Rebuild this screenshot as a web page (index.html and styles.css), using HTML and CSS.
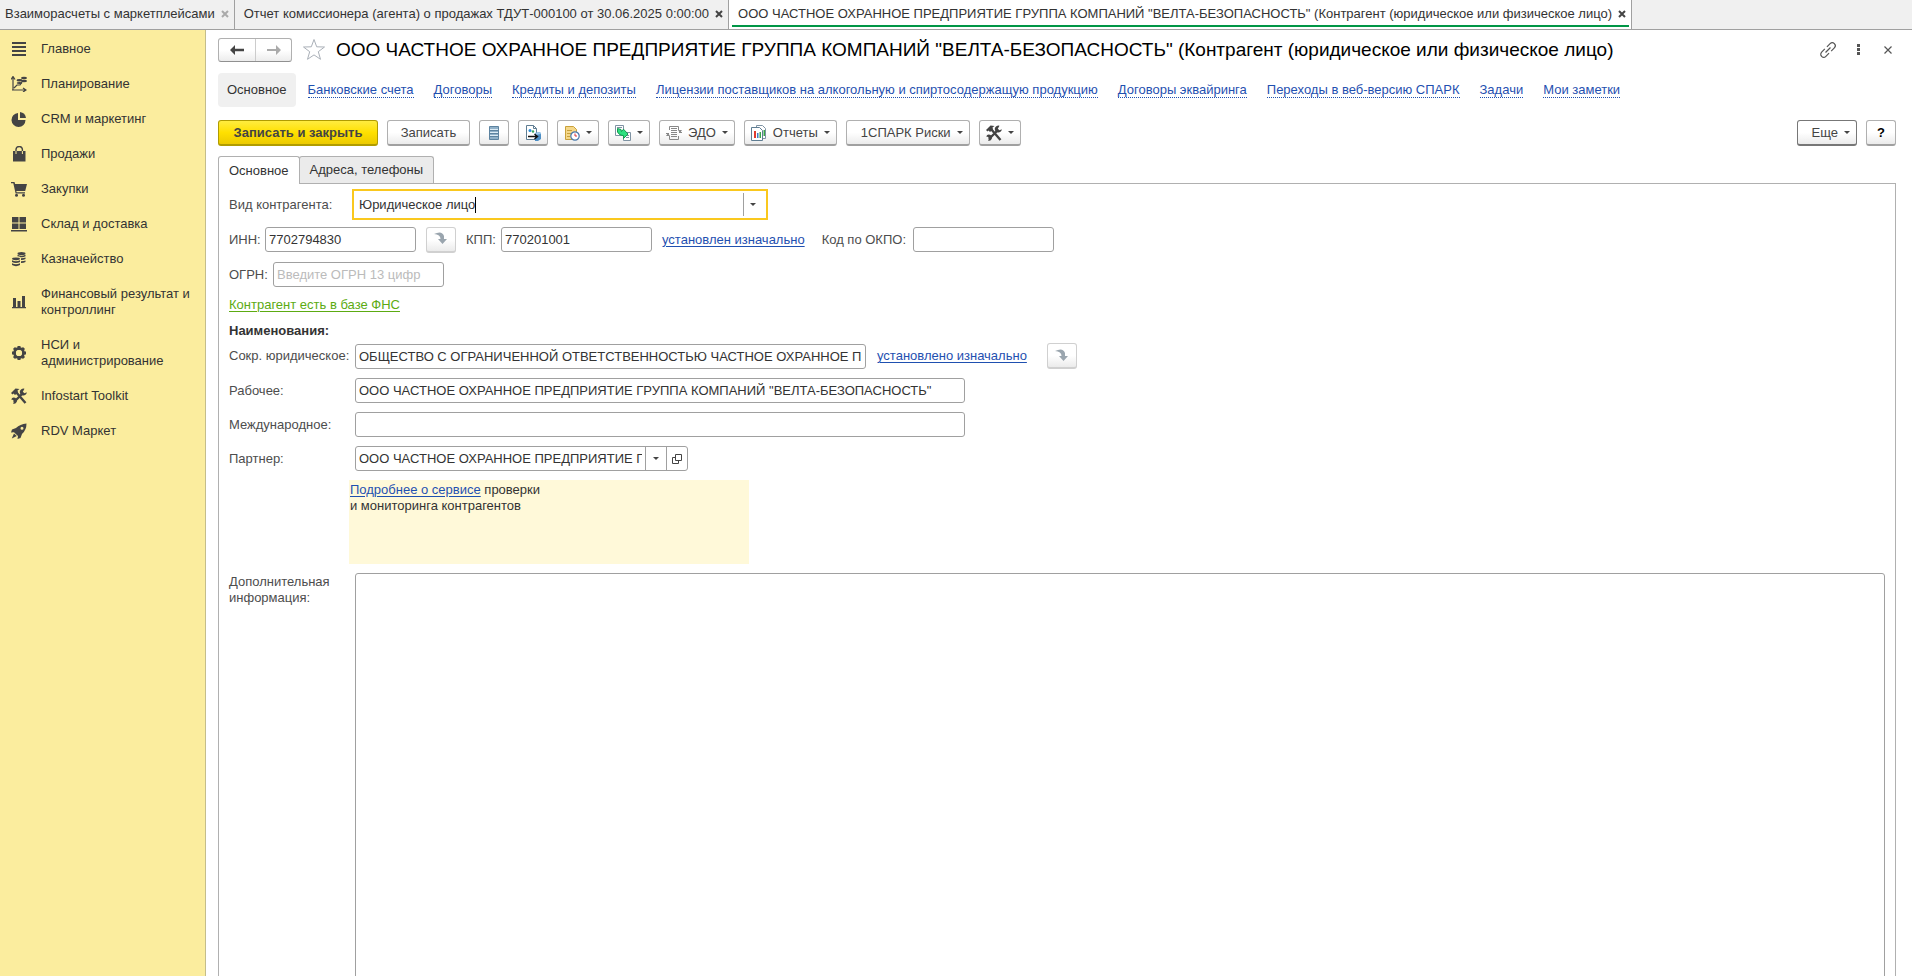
FILE: index.html
```html
<!DOCTYPE html>
<html lang="ru">
<head>
  <meta charset="UTF-8" />
  <meta name="viewport" content="width=device-width, initial-scale=1.0"/>
  <title>Контрагент</title>
  <link rel="stylesheet" href="styles.css">
</head>
<body>
  <div class="tabs">
    <div class="tab">Взаиморасчеты с маркетплейсами <button class="tab-close muted" aria-label="Закрыть"><svg width="8" height="8" viewBox="0 0 8 8"><path d="M1 1l6 6M7 1l-6 6"/></svg></button></div>
    <div class="tab">Отчет комиссионера (агента) о продажах ТДУТ-000100 от 30.06.2025 0:00:00 <button class="tab-close" aria-label="Закрыть"><svg width="8" height="8" viewBox="0 0 8 8"><path d="M1 1l6 6M7 1l-6 6"/></svg></button></div>
    <div class="tab active">ООО ЧАСТНОЕ ОХРАННОЕ ПРЕДПРИЯТИЕ ГРУППА КОМПАНИЙ "ВЕЛТА-БЕЗОПАСНОСТЬ" (Контрагент (юридическое или физическое лицо) <button class="tab-close" aria-label="Закрыть"><svg width="8" height="8" viewBox="0 0 8 8"><path d="M1 1l6 6M7 1l-6 6"/></svg></button></div>
  </div>

  <div class="layout">
    <nav class="sidebar">
      <a href="#"><svg class="icon" viewBox="0 0 16 16"><path d="M1 1h14v2H1zM1 5h14v2H1zM1 9h14v2H1zM1 13h14v2H1z"/></svg><span>Главное</span></a>
      <a href="#"><svg class="icon" viewBox="0 0 16 16"><path d="M2 14V1M0 3.500l2-3 2 3M1 14h13M12 12l3 2-3 2M3 12l3-3h3l2-3" fill="none" stroke="#444" stroke-width="1.200"/><ellipse cx="13" cy="2" rx="3" ry="1.300"/><ellipse cx="8.500" cy="4.200" rx="3" ry="1.300"/><ellipse cx="13" cy="5" rx="3" ry="1.200"/><ellipse cx="8.500" cy="7" rx="2.800" ry="1"/></svg><span>Планирование</span></a>
      <a href="#"><svg class="icon" viewBox="0 0 16 16"><path d="M7 2v7h7.500A7 7 0 1 1 7 2z"/><path d="M9 1a7 7 0 0 1 6 6H9z"/></svg><span>CRM и маркетинг</span></a>
      <a href="#"><svg class="icon" viewBox="0 0 16 16"><path d="M2 5h12.500v10.500H2z"/><path d="M5 8V3.500a3.200 3 0 0 1 6.400 0V8" fill="none" stroke="#444" stroke-width="1.400"/><path d="M5 5v3M11.400 5v3" stroke="#fbed9e"/></svg><span>Продажи</span></a>
      <a href="#"><svg class="icon" viewBox="0 0 16 16"><path d="M0 1h3.500l.6 2H16l-1.800 7H5.300l.4 1.300H14v1.200H4.600L2.300 2.200H0z"/><circle cx="5.500" cy="14.200" r="1.500"/><circle cx="12.500" cy="14.200" r="1.500"/></svg><span>Закупки</span></a>
      <a href="#"><svg class="icon" viewBox="0 0 16 16"><path d="M1 1h6.500v5.500H1zM8.500 1H15v5.500H8.500zM1 7.500h6.500V13H1zM8.500 7.500H15V13H8.500zM0 14h16v1.500H0z"/></svg><span>Склад и доставка</span></a>
      <a href="#"><svg class="icon" viewBox="0 0 16 16"><ellipse cx="10.500" cy="2.500" rx="4" ry="1.500"/><path d="M6.500 3.700q4 2 8 0v1.500q-2 1.500-5 1-1-.8-3-.9zM10 7.300q3 0 4.500-.8v1.600q-2 1-4.500.9zM10 10.300q3 0 4.500-.8v1.600q-2 1-4.500.9z"/><ellipse cx="5" cy="7.800" rx="4" ry="1.400"/><path d="M1 9.300q4 2 8 0v1.600q-4 2-8 0zM1 12.300q4 2 8 0v1.700q-4 2.300-8 0z"/></svg><span>Казначейство</span></a>
      <a href="#"><svg class="icon" viewBox="0 0 16 16"><path d="M1 13h14v1.200H1zM2 4h3v9H2zM6.500 7h3v6h-3zM11 2h3v11h-3z"/></svg><span>Финансовый результат и контроллинг</span></a>
      <a href="#"><svg class="icon" viewBox="0 0 16 16"><circle cx="8" cy="8" r="4.500" fill="none" stroke="#444" stroke-width="2.800"/><path d="M8 1v3M8 12v3M1 8h3M12 8h3M3 3l2 2M11 11l2 2M13 3l-2 2M3 13l2-2" stroke="#444" stroke-width="3"/><circle cx="8" cy="8" r="2.900" fill="#fbed9e"/></svg><span>НСИ и администрирование</span></a>
      <a href="#"><svg class="icon" viewBox="0 0 16 16"><path d="M3 14l8.500-8.500M5 4l9.500 11" fill="none" stroke="#444" stroke-width="2.400"/><path d="M0 5l4.500-4.500 4 .5-2 1.500.5 2L4 7 2.500 5.500 1.500 6.500z"/><path d="M13.500.7a3.500 3.500 0 1 0 2.300 3.500l-2.300 1-1.700-1.500zM2 15.500a3 3 0 1 0-1.800-4l2 .6.800 1.600z"/></svg><span>Infostart Toolkit</span></a>
      <a href="#"><svg class="icon" viewBox="0 0 16 16"><path fill-rule="evenodd" d="M15.500.5Q9 1 5 5L1 6.500 0 9.500l3-.2L7 13l-.5 3 3-1L11 11Q15.500 7 15.500.5zM11 3.700a1.500 1.500 0 1 1 0 3 1.500 1.500 0 0 1 0-3z"/><path d="M3 10.500L.8 15.500 5.800 13z"/></svg><span>RDV Маркет</span></a>
    </nav>

    <main class="page">
      <header class="title-row">
        <div class="history">
          <button aria-label="Назад"><svg width="14" height="10" viewBox="0 0 14 10"><path fill="#444" d="M0 5l5-5v3.700h9v2.600H5V10z"/></svg></button>
          <button aria-label="Вперед"><svg width="14" height="10" viewBox="0 0 14 10"><path fill="#aaa" d="M14 5L9 0v3.900H0v2.200h9V10z"/></svg></button>
        </div>
        <button class="plain star" aria-label="В избранное"><svg width="24" height="24" viewBox="0 0 24 24"><path fill="#fff" stroke="#aab0b8" d="M12 1.500l2.700 7.300 7.800.2-6.200 4.700 2.200 7.600-6.500-4.400-6.500 4.400 2.200-7.600L1.500 9l7.800-.2z"/></svg></button>
        <h1>ООО ЧАСТНОЕ ОХРАННОЕ ПРЕДПРИЯТИЕ ГРУППА КОМПАНИЙ "ВЕЛТА-БЕЗОПАСНОСТЬ" (Контрагент (юридическое или физическое лицо)</h1>
        <div class="window-tools">
          <button class="plain" aria-label="Ссылка"><svg width="16" height="16" viewBox="0 0 16 16"><g fill="none" stroke="#555" stroke-width="1.200" transform="rotate(-45 8 8)"><path d="M6.500 5H2a3 3 0 0 0-3 3 3 3 0 0 0 3 3h4.500M9.500 5H14a3 3 0 0 1 3 3 3 3 0 0 1-3 3H9.500M4.500 8h7"/></g></svg></button>
          <button class="plain" aria-label="Меню"><svg width="16" height="16" viewBox="0 0 16 16"><path fill="#555" d="M7 2h3v3H7zM7 6h3v3H7zM7 10h3v3H7z"/></svg></button>
          <button class="plain" aria-label="Закрыть"><svg width="16" height="16" viewBox="0 0 16 16"><path fill="none" stroke="#555" stroke-width="1.200" d="M4.500 4.500l7 7M11.500 4.500l-7 7"/></svg></button>
        </div>
      </header>

      <nav class="links">
        <a class="current" href="#">Основное</a>
        <a href="#">Банковские счета</a>
        <a href="#">Договоры</a>
        <a href="#">Кредиты и депозиты</a>
        <a href="#">Лицензии поставщиков на алкогольную и спиртосодержащую продукцию</a>
        <a href="#">Договоры эквайринга</a>
        <a href="#">Переходы в веб-версию СПАРК</a>
        <a href="#">Задачи</a>
        <a href="#">Мои заметки</a>
      </nav>

      <div class="toolbar">
        <button class="btn primary">Записать и закрыть</button>
        <button class="btn save">Записать</button>
        <button class="btn square" aria-label="Список"><svg width="16" height="16" viewBox="0 0 16 16"><path fill="#8fb0c8" stroke="#5d83a0" d="M3.500 1.500h9v13h-9z"/><path stroke="#dcebf5" d="M4 4.500h8M4 7.500h8M4 10.500h8"/><path stroke="#5d83a0" d="M4 5.500h8M4 8.500h8M4 11.500h8"/></svg></button>
        <button class="btn square" aria-label="Структура подчиненности"><svg width="16" height="16" viewBox="0 0 16 16"><path fill="#fff" stroke="#5f7d92" d="M1.500 14.500V.5h7l3 3v11z"/><path fill="none" stroke="#5f7d92" d="M8.500.5v3h3"/><path fill="#4c8ec5" d="M10 8l5-1 1 2v5l-3 2h-3z"/><path fill="#9cc7ea" d="M10 8l5-1 1 2-5 1z"/><circle cx="5" cy="5.500" r="1.500" fill="#2a8bd6"/><circle cx="8" cy="6.500" r="1.200" fill="#39a65a"/><path fill="none" stroke="#111" stroke-width="1.400" d="M3 11.500h9M9.500 9l3 2.500-3 2.500"/></svg></button>
        <button class="btn drop" aria-label="Задачи"><svg width="16" height="16" viewBox="0 0 16 16"><path fill="#f5d88a" stroke="#c9a13b" d="M1.500 1.500h8l3 3v10h-11z"/><path stroke="#c9a13b" d="M3 5.500h5M3 8.500h5M3 11.500h3"/><circle cx="11" cy="11" r="4.200" fill="#fff" stroke="#4878a8" stroke-width="1.200"/><path fill="none" stroke="#d33" d="M11 8.500V11h2"/></svg><i class="caret"></i></button>
        <button class="btn drop" aria-label="Создать на основании"><svg width="16" height="16" viewBox="0 0 16 16"><path fill="#fff" stroke="#7f93a3" d="M.5.500h8v10h-8zM8.500 7.500h7v8h-7z"/><path stroke="#7f93a3" d="M2 2.500h5M11 10.500h3M11 12.500h3"/><path fill="#2ee080" stroke="#149a4f" d="M2.500 3.500l3.500 1 .5 2 2-2.300L13 9l-4.500 4.500v-2.800Q4 10.500 2.500 7z"/></svg><i class="caret"></i></button>
        <button class="btn drop"><svg width="16" height="16" viewBox="0 0 16 16"><path fill="none" stroke="#888" d="M3.500 5V1.500h9V5M3.500 11v3.500h9V11M5 3.500h6M5 5.500h6M5 7.500h6M5 9.500h6M5 11.500h6M0 8.500h3M13 7.500h3"/><path fill="#888" d="M12 5h4l-2 3zM0 11h4L2 8z"/></svg>ЭДО<i class="caret"></i></button>
        <button class="btn drop"><svg width="16" height="16" viewBox="0 0 16 16"><path fill="#fff" stroke="#7f93a3" d="M5.500.500h6l3 3v10h-9z"/><path fill="#fff" stroke="#5f7d92" d="M.5 2.500h8l3 3v10H.5z"/><path fill="#e03b2f" d="M3 6h2v7H3z"/><path fill="#3f7fc4" d="M6 8h1.500v5H6z"/><path fill="#3aa64a" d="M8.500 7H10v6H8.500zM12.500 5H14v6h-1.500z"/></svg>Отчеты<i class="caret"></i></button>
        <button class="btn drop spark">1СПАРК Риски<i class="caret"></i></button>
        <button class="btn drop" aria-label="Инструменты"><svg class="icon" viewBox="0 0 16 16"><path d="M3 14l8.500-8.500M5 4l9.500 11" fill="none" stroke="#444" stroke-width="2.400"/><path d="M0 5l4.500-4.500 4 .5-2 1.500.5 2L4 7 2.500 5.500 1.500 6.500z"/><path d="M13.500.7a3.500 3.500 0 1 0 2.300 3.500l-2.300 1-1.700-1.500zM2 15.500a3 3 0 1 0-1.800-4l2 .6.800 1.600z"/></svg><i class="caret"></i></button>
        <button class="btn drop more">Еще<i class="caret"></i></button>
        <button class="btn square help">?</button>
      </div>

      <div class="form-tabs">
        <button class="selected">Основное</button>
        <button>Адреса, телефоны</button>
      </div>

      <form class="panel">
        <div class="row kind">
          <label class="name" for="kind">Вид контрагента:</label>
          <div class="combo">
            <label class="text"><input id="kind" type="text" value="Юридическое лицо"></label>
            <button type="button" aria-label="Выбрать"><i class="caret"></i></button>
          </div>
        </div>

        <div class="row codes">
          <label for="inn">ИНН:</label>
          <input class="field code" id="inn" type="text" value="7702794830">
          <button type="button" class="btn square light" aria-label="Заполнить по ИНН"><svg width="16" height="16" viewBox="0 0 16 16"><path fill="#9aa5ae" d="M1 3q8-4 10 2v3h3l-4.500 5L5 8h2.500Q7.500 3.500 1 3z"/></svg></button>
          <label for="kpp">КПП:</label>
          <input class="field code" id="kpp" type="text" value="770201001">
          <a class="link" href="#">установлен изначально</a>
          <label class="okpo-label" for="okpo">Код по ОКПО:</label>
          <input class="field okpo" id="okpo" type="text">
        </div>

        <div class="row ogrn-row">
          <label for="ogrn">ОГРН:</label>
          <input class="field ogrn" id="ogrn" type="text" placeholder="Введите ОГРН 13 цифр">
        </div>

        <a class="link green" href="#">Контрагент есть в базе ФНС</a>
        <h2>Наименования:</h2>

        <div class="row short">
          <label class="name" for="short">Сокр. юридическое:</label>
          <input class="field short-name" id="short" type="text" value="ОБЩЕСТВО С ОГРАНИЧЕННОЙ ОТВЕТСТВЕННОСТЬЮ ЧАСТНОЕ ОХРАННОЕ ПРЕДПРИЯТИЕ">
          <a class="link" href="#">установлено изначально</a>
          <button type="button" class="btn square light" aria-label="Заполнить"><svg width="16" height="16" viewBox="0 0 16 16"><path fill="#9aa5ae" d="M1 3q8-4 10 2v3h3l-4.500 5L5 8h2.500Q7.500 3.500 1 3z"/></svg></button>
        </div>

        <div class="row">
          <label class="name" for="work">Рабочее:</label>
          <input class="field wide" id="work" type="text" value='ООО ЧАСТНОЕ ОХРАННОЕ ПРЕДПРИЯТИЕ ГРУППА КОМПАНИЙ "ВЕЛТА-БЕЗОПАСНОСТЬ"'>
        </div>

        <div class="row">
          <label class="name" for="intl">Международное:</label>
          <input class="field wide" id="intl" type="text">
        </div>

        <div class="row">
          <label class="name" for="partner">Партнер:</label>
          <div class="field picker">
            <input id="partner" type="text" value='ООО ЧАСТНОЕ ОХРАННОЕ ПРЕДПРИЯТИЕ ГРУППА КОМПАНИЙ'>
            <button type="button" aria-label="Выбрать"><i class="caret"></i></button>
            <button type="button" aria-label="Открыть"><svg width="10" height="10" viewBox="0 0 10 10"><path fill="none" stroke="#444" d="M3.500.500h6v6h-6zM3.500 3.500h-3v6h6v-3"/></svg></button>
          </div>
        </div>

        <div class="note"><a class="link" href="#">Подробнее о сервисе</a> проверки<br>и мониторинга контрагентов</div>

        <div class="row info">
          <label class="name" for="info">Дополнительная информация:</label>
          <textarea class="field" id="info"></textarea>
        </div>
      </form>
    </main>
  </div>
</body>
</html>
```

FILE: styles.css
```css
:root {
  --text: #333;
  --label: #4d4d4d;
  --link: #1f50b0;
  --line: #a0a0a0;
  --side: #fbed9e;
}

* {
  box-sizing: border-box;
}

body {
  margin: 0;
  height: 100vh;
  display: flex;
  flex-direction: column;
  overflow: hidden;
  background: #fff;
  color: var(--text);
  font: 13px/16px "Liberation Sans", Arial, sans-serif;
}

button, input, textarea {
  font: inherit;
  color: inherit;
}

button {
  padding: 0;
  cursor: pointer;
}

svg {
  flex: none;
  display: block;
}

/* open windows */
.tabs {
  flex: none;
  display: flex;
  height: 30px;
  background: #f0f0f0;
  border-bottom: 1px solid var(--line);
}

.tab {
  display: flex;
  align-items: center;
  gap: 6px;
  padding: 0 5px 2px 9px;
  border-right: 1px solid var(--line);
  white-space: nowrap;
}

.tab:first-child {
  padding-left: 5px;
}

.tab.active {
  position: relative;
  background: #fff;
}

.tab.active::after {
  content: "";
  position: absolute;
  left: 3px;
  right: 2px;
  bottom: 2px;
  height: 2px;
  background: #009646;
}

.tab-close {
  border: none;
  background: none;
}

.tab-close path {
  stroke: #444;
  stroke-width: 2;
}

.tab-close.muted path {
  stroke: #aaa;
}

.layout {
  flex: 1;
  min-height: 0;
  display: flex;
  overflow: hidden;
}

.sidebar {
  flex: none;
  width: 206px;
  padding-top: 1px;
  background: var(--side);
  border-right: 1px solid #c4bd8a;
}

.sidebar a {
  display: flex;
  align-items: center;
  gap: 14px;
  padding: 10px 10px 9px 11px;
  color: var(--text);
  text-decoration: none;
}

.icon {
  width: 16px;
  height: 16px;
  fill: #444;
}

.page {
  flex: 1;
  min-width: 0;
  display: flex;
  flex-direction: column;
  padding: 7px 16px 0 12px;
}

.title-row {
  display: flex;
  align-items: center;
  height: 26px;
}

.history {
  display: flex;
  border: 1px solid #b0b0b0;
  border-bottom-color: #909090;
  border-radius: 3px;
  background: linear-gradient(#fff 50%, #ececec);
}

.history button {
  display: flex;
  align-items: center;
  justify-content: center;
  width: 36px;
  height: 22px;
  border: none;
  background: none;
}

.history button + button {
  border-left: 1px solid #ccc;
}

.plain {
  border: none;
  background: none;
}

.star {
  margin: 0 10px;
}

h1 {
  margin: 0;
  color: #000;
  font-size: 19px;
  line-height: 24px;
  font-weight: normal;
  white-space: nowrap;
}

.window-tools {
  display: flex;
  gap: 14px;
  margin-left: auto;
}

.window-tools svg {
  overflow: visible;
}

.links {
  display: flex;
  align-items: center;
  gap: 20px;
  height: 34px;
  margin-top: 10px;
  white-space: nowrap;
}

.links a {
  color: var(--link);
  text-decoration: none;
  line-height: 14px;
  border-bottom: 1px dotted var(--link);
}

.links .current {
  margin-right: -8px;
  padding: 0 9px;
  border: none;
  border-radius: 4px;
  background: #f0f0f0;
  color: var(--text);
  line-height: 34px;
}

.toolbar {
  display: flex;
  gap: 9px;
  margin-top: 13px;
}

.btn {
  display: flex;
  align-items: center;
  justify-content: center;
  height: 26px;
  padding: 0 14px;
  border: 1px solid #b0b0b0;
  border-bottom: 2px solid #a0a0a0;
  border-radius: 3px;
  background: linear-gradient(#fff 50%, #ebebeb);
  color: #444;
}

.primary {
  width: 160px;
  border-color: #b09c00;
  background: linear-gradient(#ffec40, #ffe000 50%, #ecca00);
  font-weight: bold;
}

.save {
  width: 83px;
}

.square {
  width: 30px;
  padding: 0;
}

.drop {
  gap: 6px;
  padding: 0 6px;
}

.spark, .more {
  padding-left: 14px;
}

.more {
  margin-left: auto;
  border-color: #777;
}

.help {
  color: #000;
  font-weight: bold;
}

.light {
  border-color: #d0d0d0;
}

.caret {
  flex: none;
  border: 3px solid transparent;
  border-top-color: #444;
  border-bottom: none;
}

/* form */
.form-tabs {
  display: flex;
  margin-top: 10px;
}

.form-tabs button {
  height: 27px;
  padding: 0 10px;
  border: 1px solid #b0b0b0;
  border-bottom: none;
  border-radius: 3px 3px 0 0;
  background: #ebebeb;
}

.form-tabs .selected {
  position: relative;
  height: 28px;
  margin: 0 -1px -1px 0;
  background: #fff;
}

.panel {
  flex: 1;
  display: flex;
  flex-direction: column;
  align-items: flex-start;
  padding: 5px 10px 0;
  border: 1px solid #b0b0b0;
  border-bottom: none;
}

.row {
  display: flex;
  align-items: center;
  margin-bottom: 9px;
  color: var(--label);
  white-space: nowrap;
}

.name {
  width: 126px;
}

.field {
  height: 25px;
  padding: 0 3px;
  border: 1px solid var(--line);
  border-radius: 3px;
  background: #fff;
  color: var(--text);
}

.link {
  color: var(--link);
  text-decoration: underline;
  text-underline-offset: 2px;
}

.kind {
  margin-bottom: 6px;
}

.kind .name {
  width: 123px;
}

.combo {
  display: flex;
  align-items: center;
  width: 416px;
  height: 31px;
  border: 2px solid #fac81e;
  color: var(--text);
}

.combo .text {
  flex: 1;
  padding-left: 5px;
}

/* the field grows with its text, the right edge shows the cursor */
.combo input {
  field-sizing: content;
  display: block;
  height: 16px;
  padding: 0;
  border: none;
  border-right: 1px solid #000;
  outline: none;
}

.combo button {
  display: flex;
  align-items: center;
  justify-content: center;
  width: 23px;
  height: 23px;
  padding-right: 4px;
  border: none;
  border-left: 1px solid var(--line);
  background: none;
}

.codes {
  height: 27px;
}

.codes label:first-child {
  width: 36px;
}

.code {
  width: 151px;
  margin-right: 10px;
}

.codes .light {
  margin-right: 10px;
}

.codes label:nth-of-type(2) {
  width: 35px;
}

.okpo-label {
  width: 91px;
  margin-left: 17px;
}

.okpo {
  width: 141px;
}

.ogrn-row label {
  width: 44px;
}

.ogrn {
  width: 171px;
}

.ogrn::placeholder {
  color: #bbb;
}

.green {
  margin-top: 1px;
  color: #5cab12;
}

h2 {
  margin: 10px 0 4px;
  font-size: 13px;
  line-height: 16px;
}

.short .link {
  margin: 0 20px 0 11px;
}

.short {
  height: 26px;
}

.short-name {
  width: 511px;
}

.wide {
  width: 610px;
}

.picker {
  display: flex;
  width: 333px;
  padding-right: 0;
}

.picker input {
  flex: 1;
  min-width: 0;
  padding: 0;
  border: none;
  background: none;
}

.picker button {
  display: flex;
  align-items: center;
  justify-content: center;
  width: 21px;
  border: none;
  border-left: 1px solid var(--line);
  background: none;
}

.picker input + button {
  margin-left: 3px;
}

.note {
  width: 400px;
  height: 84px;
  margin: 0 0 9px 120px;
  padding: 2px 1px;
  background: #fff9d9;
}

.info {
  flex: 1;
  align-self: stretch;
  align-items: stretch;
  margin-bottom: -4px;
}

.info .name {
  flex: none;
  padding: 1px 10px 0 0;
  white-space: normal;
}

.info textarea {
  flex: 1;
  height: auto;
  resize: none;
}
```
